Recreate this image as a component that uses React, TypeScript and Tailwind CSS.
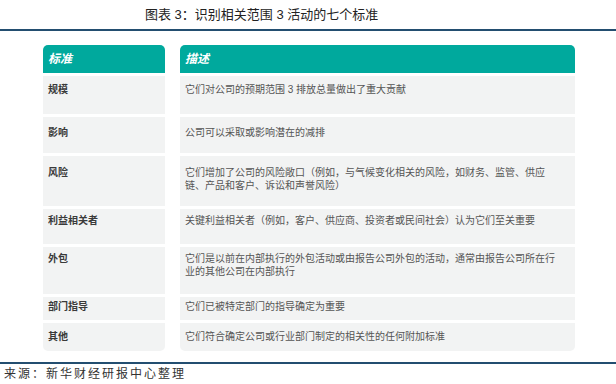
const rows = [
  { k: '规模', v: '它们对公司的预期范围 3 排放总量做出了重大贡献', h: 'h-[38px]', pt: 'pt-[7px]' },
  { k: '影响', v: '公司可以采取或影响潜在的减排', h: 'h-[36px]', pt: 'pt-[9px]' },
  {
    k: '风险',
    v: '它们增加了公司的风险敞口（例如，与气候变化相关的风险，如财务、监管、供应链、产品和客户、诉讼和声誉风险）',
    h: 'h-[50px]',
    pt: 'pt-[10px]',
  },
  { k: '利益相关者', v: '关键利益相关者（例如，客户、供应商、投资者或民间社会）认为它们至关重要', h: 'h-[35px]', pt: 'pt-[5px]' },
  {
    k: '外包',
    v: '它们是以前在内部执行的外包活动或由报告公司外包的活动，通常由报告公司所在行业的其他公司在内部执行',
    h: 'h-[47px]',
    pt: 'pt-[5px]',
  },
  { k: '部门指导', v: '它们已被特定部门的指导确定为重要', h: 'h-[23px]', pt: 'pt-[3px]' },
  { k: '其他', v: '它们符合确定公司或行业部门制定的相关性的任何附加标准', h: 'h-[28px]', pt: 'pt-[7px]' },
];

const font = "font-['Liberation_Sans','Noto_Sans_CJK_SC',sans-serif]";

export default function App() {
  return (
    <div className={`w-[616px] h-[384px] bg-white overflow-hidden ${font}`}>
      <div className="h-[29px] flex items-center pl-[145px] text-[13px] text-[#222] font-normal">
        图表 3：识别相关范围 3 活动的七个标准
      </div>
      <div className="h-[2px] bg-[#234e70]" />

      <div className="pt-[14px] pl-[43px] h-[331px]">
        <div className="flex gap-[15px] h-[28px]">
          <div className="w-[122px] bg-[#00a99d] rounded-t-[5px] pl-[5px] flex items-center text-white italic font-bold text-[12px] font-['Liberation_Serif','Noto_Sans_CJK_SC',serif]">
            标准
          </div>
          <div className="w-[395px] bg-[#00a99d] rounded-t-[5px] pl-[5px] flex items-center text-white italic font-bold text-[12px] font-['Liberation_Serif','Noto_Sans_CJK_SC',serif]">
            描述
          </div>
        </div>
        <div className="flex flex-col gap-[3px] mt-[3px]">
          {rows.map((r, i) => {
            const last = i === rows.length - 1;
            return (
              <div key={r.k} className={`flex gap-[15px] ${r.h}`}>
                <div
                  className={`w-[122px] bg-[#f2f3f3] pl-[5px] ${r.pt} text-[10px] leading-[13px] font-bold text-[#3a3a3a] ${last ? 'rounded-b-[5px]' : ''}`}
                >
                  {r.k}
                </div>
                <div
                  className={`w-[395px] bg-[#f2f3f3] pl-[5px] pr-[18px] ${r.pt} text-[10px] leading-[13px] text-[#555] ${last ? 'rounded-b-[5px]' : ''}`}
                >
                  {r.v}
                </div>
              </div>
            );
          })}
        </div>
      </div>

      <div className="h-[1.5px] bg-[#234e70]" />
      <div className="h-[20px] flex items-center pl-[4px] text-[12px] tracking-[2px] text-[#333]">
        来源：新华财经研报中心整理
      </div>
      <div className="border-t border-dashed border-[#bbb]" />
    </div>
  );
}
